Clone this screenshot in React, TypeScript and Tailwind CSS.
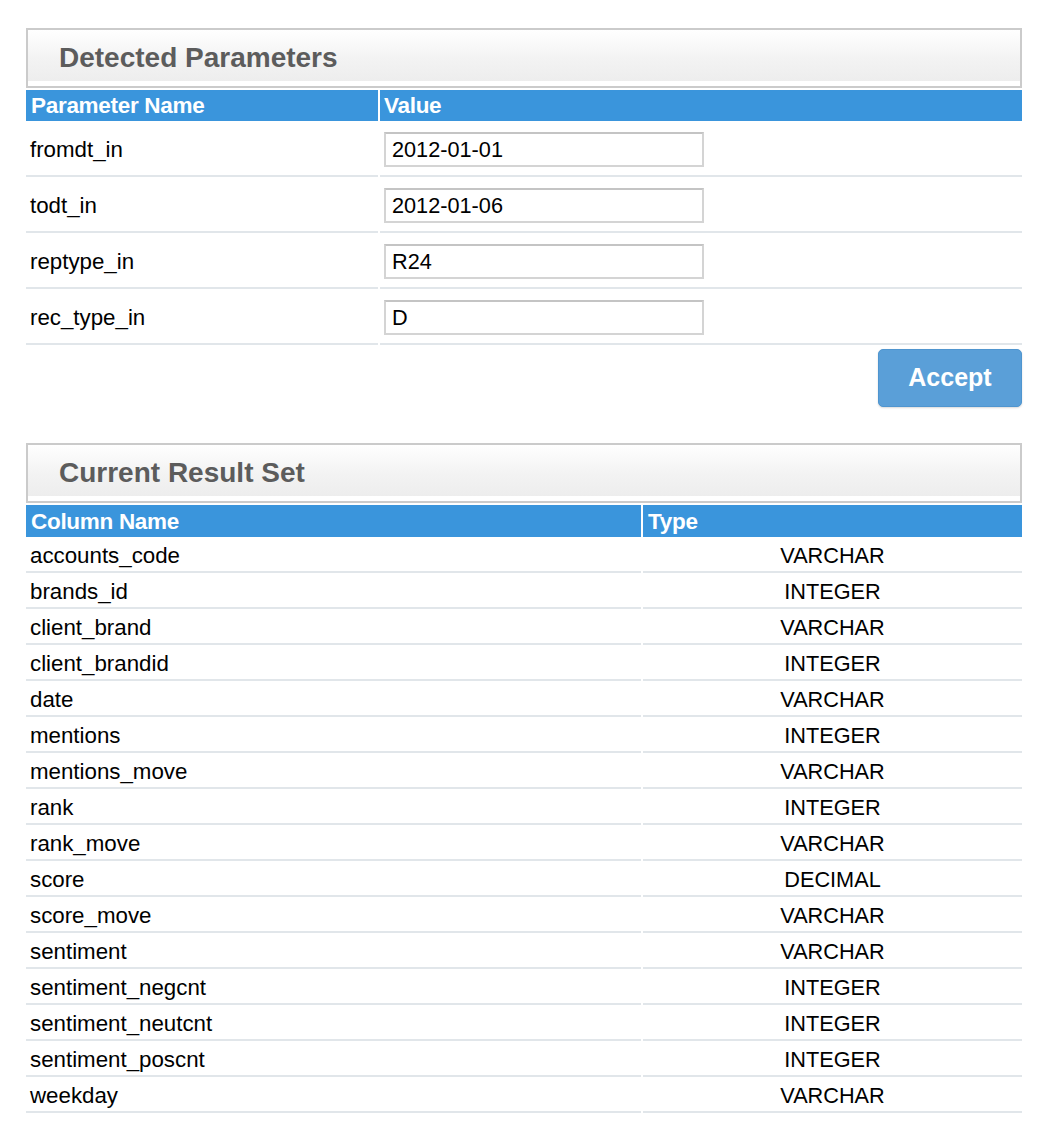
import React from "react";

const PARAMS = [
  { name: "fromdt_in", value: "2012-01-01" },
  { name: "todt_in", value: "2012-01-06" },
  { name: "reptype_in", value: "R24" },
  { name: "rec_type_in", value: "D" },
];

const COLUMNS: [string, string][] = [
  ["accounts_code", "VARCHAR"],
  ["brands_id", "INTEGER"],
  ["client_brand", "VARCHAR"],
  ["client_brandid", "INTEGER"],
  ["date", "VARCHAR"],
  ["mentions", "INTEGER"],
  ["mentions_move", "VARCHAR"],
  ["rank", "INTEGER"],
  ["rank_move", "VARCHAR"],
  ["score", "DECIMAL"],
  ["score_move", "VARCHAR"],
  ["sentiment", "VARCHAR"],
  ["sentiment_negcnt", "INTEGER"],
  ["sentiment_neutcnt", "INTEGER"],
  ["sentiment_poscnt", "INTEGER"],
  ["weekday", "VARCHAR"],
];

function PanelTitle({ title }: { title: string }) {
  return (
    <div className="h-[60px] border-2 border-[#cbcbcb] bg-gradient-to-b from-white via-[#f3f3f3] to-[#ececec] flex items-center pl-[31px] shadow-[inset_0_-5px_0_#ffffff]">
      <h2 className="text-[28px] font-bold text-[#5c5c5c] leading-none">{title}</h2>
    </div>
  );
}

export default function App() {
  return (
    <div
      className="bg-white min-h-[1134px] pt-[28px] pl-[26px] w-[1038px] text-black"
      style={{ fontFamily: '"Liberation Sans", Arial, Helvetica, sans-serif' }}
    >
      <div className="w-[996px]">
        <PanelTitle title="Detected Parameters" />

        <div className="mt-[2px] grid grid-cols-[352px_1fr] gap-x-[2px]">
          <div className="bg-[#3a95dc] h-[31px] text-white font-bold text-[22.5px] flex items-center pl-[5px] pt-[1px] tracking-[-0.3px]">
            Parameter Name
          </div>
          <div className="bg-[#3a95dc] h-[31px] text-white font-bold text-[22.5px] flex items-center pl-[4px] pt-[1px] tracking-[-0.3px]">
            Value
          </div>
          {PARAMS.map((p) => (
            <React.Fragment key={p.name}>
              <div className="h-[56px] border-b-2 border-[#e1e6ea] flex items-center pl-[4px] pt-[4px] text-[22.3px]">
                {p.name}
              </div>
              <div className="h-[56px] border-b-2 border-[#e1e6ea] flex items-center pl-[4px] pt-[2px]">
                <input
                  readOnly
                  value={p.value}
                  className="w-[320px] h-[35px] border-2 border-[#d4d4d4] border-t-[#c4c4c4] bg-white px-[6px] pt-[2px] text-[21.7px] text-black outline-none"
                  style={{ fontFamily: '"Liberation Sans", Arial, Helvetica, sans-serif' }}
                />
              </div>
            </React.Fragment>
          ))}
        </div>

        <div className="flex justify-end mt-[4px]">
          <button className="w-[144px] h-[58px] rounded-[5px] bg-[#5a9fd8] border border-[#4f95cf] text-white font-bold text-[25px] shadow-[0_1px_2px_rgba(0,0,0,0.15)]">
            Accept
          </button>
        </div>

        <div className="mt-[36px]">
          <PanelTitle title="Current Result Set" />
        </div>

        <div className="mt-[2px] grid grid-cols-[615px_1fr] gap-x-[2px]">
          <div className="bg-[#3a95dc] h-[32px] text-white font-bold text-[22.5px] flex items-center pl-[5px] pt-[1px] tracking-[-0.3px]">
            Column Name
          </div>
          <div className="bg-[#3a95dc] h-[32px] text-white font-bold text-[22.5px] flex items-center pl-[5px] pt-[1px] tracking-[-0.3px]">
            Type
          </div>
          {COLUMNS.map(([name, type]) => (
            <React.Fragment key={name}>
              <div className="h-[36px] border-b-2 border-[#e1e6ea] flex items-center pl-[4px] pt-[4px] text-[22.3px]">
                {name}
              </div>
              <div className="h-[36px] border-b-2 border-[#e1e6ea] flex items-center justify-center pt-[4px] text-[21.7px]">
                {type}
              </div>
            </React.Fragment>
          ))}
        </div>
      </div>
    </div>
  );
}
